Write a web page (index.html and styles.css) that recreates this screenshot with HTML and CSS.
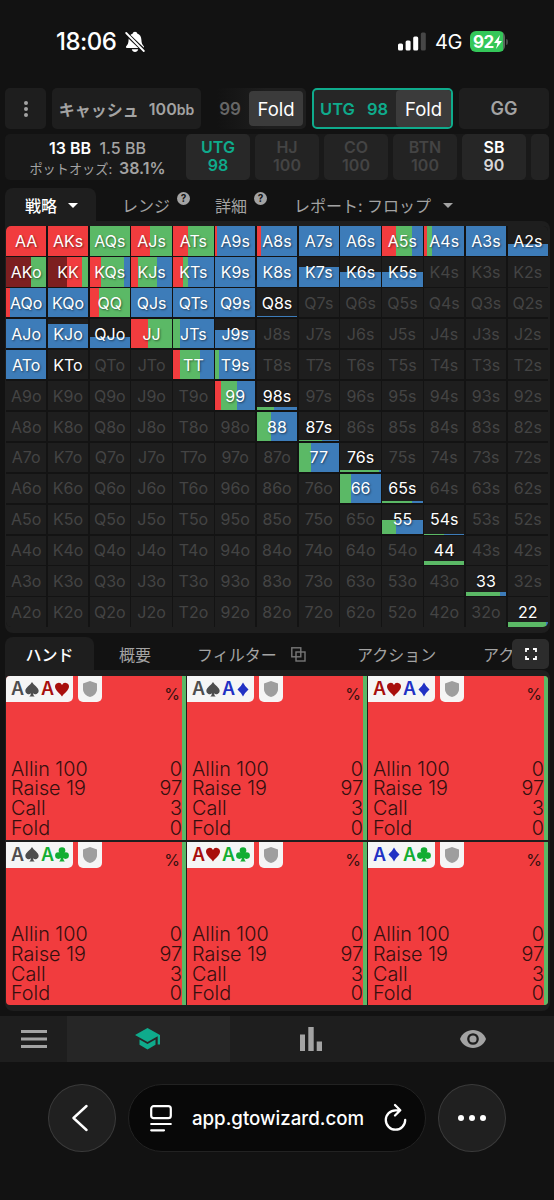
FILE: index.html
```html
<!DOCTYPE html>
<html lang="ja">
<head>
    <meta charset="UTF-8">
    <meta name="viewport" content="width=device-width, initial-scale=1.0">
    <title>GTO Wizard</title>
    <link rel="stylesheet" href="styles.css">
</head>
<body>

<svg class="defs" width="0" height="0">
    <symbol id="spade" viewBox="0 0 14 15"><path d="M7 0C5.500 3 .3 5.600.3 9A3.300 3.300 0 0 0 6 11.200Q5.800 13.500 4.300 14.500H9.700Q8.200 13.500 8 11.200A3.300 3.300 0 0 0 13.700 9C13.700 5.600 8.500 3 7 0Z"/></symbol>
    <symbol id="heart" viewBox="0 0 14 15"><path d="M7 14.500C5.500 12 0 8.500 0 4.600A3.700 3.700 0 0 1 7 2.900 3.700 3.700 0 0 1 14 4.600C14 8.500 8.500 12 7 14.500Z"/></symbol>
    <symbol id="diamond" viewBox="0 0 14 15"><path d="M7 .5Q9 4.500 12.500 7.500 9 10.500 7 14.500 5 10.500 1.500 7.500 5 4.500 7 .5Z"/></symbol>
    <symbol id="club" viewBox="0 0 14 15"><circle cx="7" cy="3.600" r="3.300"/><circle cx="3.400" cy="8.600" r="3.300"/><circle cx="10.600" cy="8.600" r="3.300"/><path d="M6 6H8L8.200 11Q8.400 13.500 9.800 14.500H4.200Q5.600 13.500 5.800 11Z"/></symbol>
    <symbol id="shield" viewBox="0 0 14 16"><path d="M7 0L14 2.600V8C14 12 11 15 7 16 3 15 0 12 0 8V2.600Z"/></symbol>
</svg>

<div class="status">
    <span class="clock">18:06</span>
    <svg class="bell" width="20" height="22" viewBox="0 0 20 22">
        <path fill="#fff" d="M10 .8C11.400.8 12 1.600 12.200 2.500 15 3.400 16.300 5.800 16.400 8.800 16.500 12.500 17.300 13.800 18.800 15.300 19.400 16.200 19 17 18 17H2C1 17 .6 16.200 1.200 15.300 2.700 13.800 3.500 12.500 3.600 8.800 3.700 5.800 5 3.400 7.800 2.500 8 1.600 8.600.8 10 .8ZM6.800 18.300H13.200C12.800 20.200 11.600 21 10 21S7.200 20.200 6.800 18.300Z"/>
        <path stroke="#121212" stroke-width="4" d="M0 1.500L20 20.500"/>
        <path stroke="#fff" stroke-width="1.800" stroke-linecap="round" d="M1.200 2L18.800 20"/>
    </svg>
    <svg class="signal" width="28" height="19" viewBox="0 0 28 19" fill="#fff">
        <rect x="0" y="11.500" width="5" height="7" rx="1.500"/>
        <rect x="7.600" y="8.500" width="5" height="10" rx="1.500"/>
        <rect x="15.200" y="4.500" width="5" height="14" rx="1.500"/>
        <rect x="22.800" y="0.500" width="5" height="18" rx="1.500" fill="#474747"/>
    </svg>
    <span class="network">4G</span>
    <span class="battery">92<svg width="8" height="14" viewBox="0 0 8 14"><path fill="#fff" d="M6 0L0 8H3.500L2 14 8 6H4.500Z"/></svg></span>
    <span class="battery-cap"></span>
</div>

<div class="spots">
    <div class="box menu"><i></i><i></i><i></i></div>
    <div class="box game">キャッシュ<b>100<small>bb</small></b></div>
    <div class="box prev"><span>99</span><b class="act">Fold</b></div>
    <div class="box current"><span>UTG</span><span>98</span><b class="act">Fold</b></div>
    <div class="box site">GG</div>
</div>

<div class="players">
    <div class="pot">
        <div class="pot-top"><b>13 BB</b> <span>1.5 BB</span></div>
        <div class="pot-odds">ポットオッズ: <b>38.1%</b></div>
    </div>
    <div class="seat active">UTG<br>98</div>
    <div class="seat">HJ<br>100</div>
    <div class="seat">CO<br>100</div>
    <div class="seat">BTN<br>100</div>
    <div class="seat next">SB<br><span>90</span></div>
    <div class="seat cut"></div>
</div>

<div class="tabs">
    <div class="tab on strategy">戦略<i class="caret"></i></div>
    <div class="tab range">レンジ<sup>?</sup></div>
    <div class="tab detail">詳細<sup>?</sup></div>
    <div class="tab report">レポート: フロップ<i class="caret"></i></div>
</div>
<div class="panel matrix-panel">
    <div class="matrix" id="matrix"></div>
</div>

<div class="tabs lower">
    <div class="tab on hands-tab">ハンド</div>
    <div class="tab summary">概要</div>
    <div class="tab filter">フィルター
        <svg width="15" height="15" viewBox="0 0 15 15" fill="none" stroke="#777" stroke-width="1.400"><rect x=".8" y=".8" width="9" height="9"/><rect x="5" y="5" width="9" height="9"/></svg>
    </div>
    <div class="tab action">アクション</div>
    <div class="tab action-cut">アク</div>
    <div class="expand">
        <svg width="12" height="12" viewBox="0 0 12 12" fill="none" stroke="#fff" stroke-width="1.800"><path d="M1 4V1H4M8 1H11V4M11 8V11H8M4 11H1V8"/></svg>
    </div>
</div>
<div class="panel combos-panel">
    <div class="combos" id="combos"></div>
</div>

<div class="nav">
    <div class="nav-menu">
        <svg width="26" height="18" viewBox="0 0 26 18" stroke="#a3a3a3" stroke-width="2.800"><path d="M0 1.500H26M0 9H26M0 16.500H26"/></svg>
    </div>
    <div class="nav-item on">
        <svg width="26" height="22" viewBox="0 0 26 22" fill="#0fab8c"><path d="M12.500 0L0 7 12.500 14 22.700 8.300V16.500H25V7ZM4.500 11.500V16.700L12.500 21.500 20.500 16.700V11.500L12.500 16Z"/></svg>
    </div>
    <div class="nav-item">
        <svg width="22" height="24" viewBox="0 0 22 24" fill="#a3a3a3"><path d="M0 7.500H5V24H0ZM8.300 0H13.700V24H8.300ZM16.700 14.500H22V24H16.700Z"/></svg>
    </div>
    <div class="nav-item">
        <svg width="26" height="18" viewBox="0 0 26 18"><path fill="#a3a3a3" d="M13 0C7 0 2 3.700 0 9 2 14.300 7 18 13 18S24 14.300 26 9C24 3.700 19 0 13 0Z"/><circle cx="13" cy="9" r="4.700" fill="#a3a3a3" stroke="#1e1e1e" stroke-width="2.300"/></svg>
    </div>
</div>

<div class="browser">
    <div class="round">
        <svg width="16" height="28" viewBox="0 0 16 28" fill="none" stroke="#fff" stroke-width="2.400" stroke-linecap="round" stroke-linejoin="round"><path d="M14.500 2L1.500 14 14.500 26"/></svg>
    </div>
    <div class="address">
        <svg width="22" height="27" viewBox="0 0 22 27" fill="none" stroke="#fff" stroke-width="2.200" stroke-linecap="round"><rect x="1.200" y="1.200" width="19.600" height="12" rx="2.500"/><path d="M1.200 19H20.800M1.200 25.300H14"/></svg>
        <span>app.gtowizard.com</span>
        <svg width="23" height="28" viewBox="0 0 23 28" fill="none" stroke="#fff" stroke-width="2.300" stroke-linecap="round" stroke-linejoin="round"><path d="M15.500 7.300H11.500A9.700 9.700 0 1 0 21.200 17M11 2L16.300 7.300 11 12.500"/></svg>
    </div>
    <div class="round dots"><i></i><i></i><i></i></div>
</div>

<script src="script.js"></script>
</body>
</html>
```

FILE: styles.css
```css
* {
    box-sizing: border-box;
}
body {
    margin: 0;
    width: 554px;
    height: 1200px;
    overflow: hidden;
    background-color: #121212;
    color: #a3a3a3;
    font-family: Inter, "Noto Sans CJK JP", sans-serif;
}
b {
    font-weight: 600;
}
svg {
    display: block;
    flex: none;
}
.defs {
    position: absolute;
}

/* phone status bar */
.status {
    height: 88px;
    padding: 0 46px 5px 56px;
    display: flex;
    align-items: center;
    color: #fff;
}
.clock {
    width: 69px;
    font-size: 24px;
    font-weight: 500;
    letter-spacing: -0.5px;
}
.signal {
    margin-left: auto;
    margin-right: 9px;
}
.network {
    width: 35px;
    font-size: 20px;
    letter-spacing: -0.5px;
}
.battery {
    display: flex;
    align-items: center;
    width: 35px;
    height: 21px;
    padding-left: 3px;
    border-radius: 6px;
    background: linear-gradient(90deg, #34c759 94%, #58695c 94%);
    font-size: 17px;
    font-weight: 700;
    letter-spacing: -0.6px;
}
.battery-cap {
    width: 2px;
    height: 6px;
    margin-left: 1px;
    border-radius: 0 2px 2px 0;
    background-color: #4a4a4a;
}

/* spot history */
.spots {
    display: flex;
    gap: 6px;
    height: 41px;
    padding-left: 5px;
}
.box {
    display: flex;
    flex: none;
    align-items: center;
    justify-content: center;
    border-radius: 5px;
    background-color: #1e1e1e;
    font-weight: 600;
}
.menu {
    flex-direction: column;
    gap: 2px;
    width: 41px;
}
.menu i {
    width: 4px;
    height: 4px;
    border-radius: 50%;
    background-color: #a3a3a3;
}
.game {
    width: 149px;
    gap: 10px;
    font-size: 16px;
}
.game small {
    font-size: 14px;
}
.prev {
    width: 99px;
    justify-content: flex-end;
    gap: 8px;
    padding-right: 3px;
    background: linear-gradient(90deg, #121212 10%, #1e1e1e 60%);
    color: #666;
    font-size: 17px;
}
.act {
    display: flex;
    align-items: center;
    justify-content: center;
    width: 54px;
    height: 35px;
    border-radius: 4px;
    background-color: #3b3b3b;
    color: #fff;
    font-size: 18.500px;
    font-weight: 400;
}
.current {
    width: 141px;
    gap: 12px;
    justify-content: flex-end;
    border: 2px solid #0fab8c;
    background-color: #262626;
    color: #0fab8c;
    font-size: 16.500px;
}
.current .act {
    width: 55px;
    height: 37px;
    margin-left: -4px;
}
.site {
    width: 90px;
    font-size: 18px;
}

/* players */
.players {
    display: flex;
    gap: 5px;
    width: 544px;
    height: 46px;
    margin: 5px 0 0 5px;
    border-radius: 5px;
    background-color: #191919;
    overflow: hidden;
}
.pot {
    width: 176px;
    flex: none;
    padding: 4px 0 0 9px;
    text-align: center;
}
.pot-top {
    font-size: 16px;
    font-weight: 500;
    line-height: 20px;
}
.pot-top b {
    margin-right: 4px;
    color: #fff;
}
.pot-odds {
    font-size: 13.200px;
    line-height: 20px;
}
.pot-odds b {
    margin-left: 3px;
    font-size: 16px;
}
.seat {
    width: 64px;
    flex: none;
    padding-top: 5px;
    border-radius: 5px;
    background-color: #232323;
    color: #444;
    font-size: 16px;
    font-weight: 600;
    line-height: 17.500px;
    text-align: center;
}
.seat.active {
    background-color: #282828;
    color: #0fab8c;
}
.seat.next {
    background-color: #262626;
    color: #fff;
}
.seat.next span {
    color: #d6d6d6;
}

/* tabs */
.tabs {
    position: relative;
    display: flex;
    height: 33px;
    margin: 8px 0 0 5px;
    font-size: 16px;
    font-weight: 400;
}
.tab {
    display: flex;
    align-items: center;
    flex: none;
    height: 35px;
    padding-bottom: 1px;
    white-space: nowrap;
}
.tab.on {
    border-radius: 8px 8px 0 0;
    background-color: #1e1e1e;
    color: #fff;
    font-weight: 500;
}
.caret {
    margin-left: 11px;
    border: 5px solid transparent;
    border-top-color: currentColor;
    border-bottom-width: 0;
}
.report .caret {
    margin-left: 12px;
}
.strategy {
    width: 91px;
    padding-left: 20px;
}
.range {
    width: 119px;
    padding-left: 26px;
}
.detail {
    width: 79px;
}
.tab sup {
    width: 13px;
    height: 13px;
    margin: 0 0 13px 7px;
    border-radius: 50%;
    background-color: #a3a3a3;
    color: #121212;
    font-size: 10px;
    font-weight: 700;
    line-height: 13px;
    text-align: center;
}
.panel {
    width: 545px;
    margin-left: 5px;
    padding: 5px 1px 0;
    border-radius: 0 8px 8px 8px;
    background-color: #1e1e1e;
}

/* hand matrix */
.matrix-panel {
    height: 412px;
}
.matrix {
    display: grid;
    grid-template-columns: repeat(13, 1fr);
    grid-template-rows: repeat(13, 1fr);
    gap: 1.400px;
    width: 542px;
    height: 401px;
    border-radius: 5px;
    background-color: #131313;
    overflow: hidden;
}
.cell {
    position: relative;
    display: flex;
    align-items: center;
    justify-content: center;
    background-color: #1e1e1e;
    color: #444;
    font-size: 16px;
}
.cell.in {
    color: #fff;
    text-shadow: 1px 1px 2px rgba(0, 0, 0, 0.5);
}
.cell span {
    position: relative;
}
.bar {
    position: absolute;
    left: 0;
    right: 0;
    bottom: 0;
    display: flex;
}
.allin { background-color: #7d1f20; }
.raise { background-color: #f13c3e; }
.call { background-color: #5bb966; }
.fold { background-color: #3d7cb9; }

/* combos */
.lower {
    height: 33px;
    margin-top: 4px;
}
.hands-tab {
    width: 89px;
    justify-content: center;
}
.summary {
    width: 103px;
    padding-left: 25px;
}
.filter {
    width: 160px;
    gap: 14px;
}
.action {
    width: 126px;
}
.expand {
    position: absolute;
    right: 5px;
    top: 2px;
    display: flex;
    align-items: center;
    justify-content: center;
    width: 37px;
    height: 30px;
    border-radius: 5px;
    background-color: #2c2c2c;
}
.combos-panel {
    height: 341px;
    padding-top: 6px;
}
.combos {
    display: grid;
    grid-template-columns: repeat(3, 1fr);
    grid-template-rows: repeat(2, 1fr);
    gap: 1px;
    row-gap: 2px;
    width: 542px;
    height: 329px;
    border-radius: 4px;
    overflow: hidden;
}
.combo {
    display: flex;
    flex-direction: column;
    justify-content: space-between;
    border-right: 4px solid #5bb966;
    background-color: #f13c3e;
    color: #35100f;
}
.combo-top {
    display: flex;
    gap: 5px;
    height: 26px;
}
.cards, .lock {
    display: flex;
    align-items: center;
    background-color: #f5f5f5;
}
.cards {
    width: 67px;
    padding-left: 5px;
    border-radius: 0 0 5px 0;
    font-size: 18px;
    font-weight: 600;
    line-height: 26px;
}
.cards svg {
    width: 14px;
    height: 15px;
    margin: 0 2px 0 1px;
    fill: currentColor;
}
.s { color: #4d4d4d; }
.h { color: #a80f0c; }
.d { color: #2131c4; }
.c { color: #13ad32; }
.cards span {
    display: flex;
    align-items: center;
}
.lock {
    width: 24px;
    justify-content: center;
    border-radius: 0 0 5px 5px;
    fill: #9e9e9e;
}
.pct {
    margin: 8px 2px 0 auto;
    font-size: 16px;
}
.lines {
    padding: 0 0 1px 5px;
    font-size: 19.800px;
    font-weight: 300;
    line-height: 19.700px;
}
.lines div {
    display: flex;
    justify-content: space-between;
}

/* bottom bars */
.nav {
    display: flex;
    height: 46px;
    margin-top: 5px;
    background-color: #1e1e1e;
}
.nav > div {
    display: flex;
    align-items: center;
    justify-content: center;
}
.nav-menu {
    width: 67.500px;
}
.nav-item {
    width: 162.500px;
}
.nav-item.on {
    background-color: #262626;
}
.browser {
    display: flex;
    gap: 12px;
    height: 68px;
    margin: 22px 48px 0;
}
.round {
    display: flex;
    align-items: center;
    justify-content: center;
    gap: 5px;
    width: 68px;
    border: 1px solid #3a3a3a;
    border-radius: 50%;
    background-color: #202020;
}
.round svg {
    margin-right: 3px;
}
.dots i {
    width: 6px;
    height: 6px;
    border-radius: 50%;
    background-color: #fff;
}
.address {
    display: flex;
    align-items: center;
    justify-content: space-between;
    width: 299px;
    padding: 0 18px 0 21px;
    border: 1px solid #222;
    border-radius: 34px;
    background-color: #080808;
    color: #fff;
    font-size: 18.700px;
    font-weight: 500;
}
.address svg:last-child {
    margin-bottom: 3px;
}
```

FILE: script.js
```js
const ranks = 'AKQJT98765432';

// hand: [height %, allin, raise, call, fold]
const strategy = {
    AA: [100, 0, 100, 0, 0], AKs: [100, 0, 100, 0, 0], AQs: [100, 0, 0, 100, 0],
    AJs: [100, 0, 45, 55, 0], ATs: [100, 0, 36, 64, 0], A9s: [100, 0, 5, 0, 95],
    A8s: [100, 0, 10, 0, 90], A7s: [100, 0, 1, 0, 99], A6s: [100, 0, 0, 0, 100],
    A5s: [100, 0, 35, 38, 27], A4s: [100, 0, 8, 11, 81], A3s: [100, 0, 0, 0, 100],
    A2s: [40, 0, 0, 0, 100],
    AKo: [100, 62, 0, 38, 0], KK: [100, 47, 37, 16, 0], KQs: [100, 0, 28, 58, 14],
    KJs: [100, 0, 17, 47, 36], KTs: [100, 0, 24, 13, 63], K9s: [100, 0, 0, 0, 100],
    K8s: [100, 0, 0, 0, 100], K7s: [65, 0, 0, 0, 100], K6s: [49, 0, 0, 0, 100],
    K5s: [49, 0, 0, 0, 100],
    AQo: [100, 0, 11, 0, 89], KQo: [100, 0, 0, 0, 100], QQ: [100, 0, 24, 76, 0],
    QJs: [100, 0, 0, 0, 100], QTs: [100, 0, 0, 0, 100], Q9s: [100, 0, 0, 0, 100],
    Q8s: [4, 0, 0, 0, 100],
    AJo: [100, 0, 0, 0, 100], KJo: [82, 0, 0, 0, 100], QJo: [38, 0, 0, 0, 100],
    JJ: [100, 0, 42, 58, 0], JTs: [100, 0, 0, 18, 82], J9s: [63, 0, 0, 0, 100],
    ATo: [100, 0, 0, 0, 100], KTo: [0, 0, 0, 0, 100], TT: [100, 0, 17, 49, 34],
    T9s: [100, 0, 0, 9, 91],
    '99': [100, 0, 15, 40, 45], '98s': [12, 0, 0, 42, 58],
    '88': [100, 0, 0, 34, 66], '87s': [5, 0, 0, 57, 43],
    '77': [100, 0, 0, 31, 69], '76s': [6, 0, 0, 95, 5],
    '66': [100, 0, 0, 27, 73], '65s': [8, 0, 0, 75, 25],
    '55': [48, 0, 0, 33, 67], '54s': [2, 0, 0, 50, 50],
    '44': [14, 0, 0, 100, 0], '33': [14, 0, 0, 84, 16], '22': [18, 0, 0, 96, 4]
};
const actions = ['allin', 'raise', 'call', 'fold'];

let html = '';
for (let row = 0; row < 13; row++) {
    for (let col = 0; col < 13; col++) {
        let hand = ranks[row] + ranks[col];
        if (col > row) hand += 's';
        if (col < row) hand = ranks[col] + ranks[row] + 'o';
        const s = strategy[hand];
        let bar = '';
        if (s) {
            bar = `<div class="bar" style="height:${s[0]}%">` +
                actions.map((a, i) => s[i + 1] ? `<div class="${a}" style="width:${s[i + 1]}%"></div>` : '').join('') +
                '</div>';
        }
        html += `<div class="cell${s ? ' in' : ''}">${bar}<span>${hand}</span></div>`;
    }
}
document.getElementById('matrix').innerHTML = html;

const suits = { s: 'spade', h: 'heart', d: 'diamond', c: 'club' };
const card = s => `<span class="${s}">A<svg><use href="#${suits[s]}"/></svg></span>`;

document.getElementById('combos').innerHTML = ['sh', 'sd', 'hd', 'sc', 'hc', 'dc'].map(c => `
    <div class="combo">
        <div class="combo-top">
            <div class="cards">${card(c[0])}${card(c[1])}</div>
            <div class="lock"><svg width="14" height="16"><use href="#shield"/></svg></div>
            <span class="pct">%</span>
        </div>
        <div class="lines">
            <div><span>Allin 100</span><span>0</span></div>
            <div><span>Raise 19</span><span>97</span></div>
            <div><span>Call</span><span>3</span></div>
            <div><span>Fold</span><span>0</span></div>
        </div>
    </div>`).join('');
```
